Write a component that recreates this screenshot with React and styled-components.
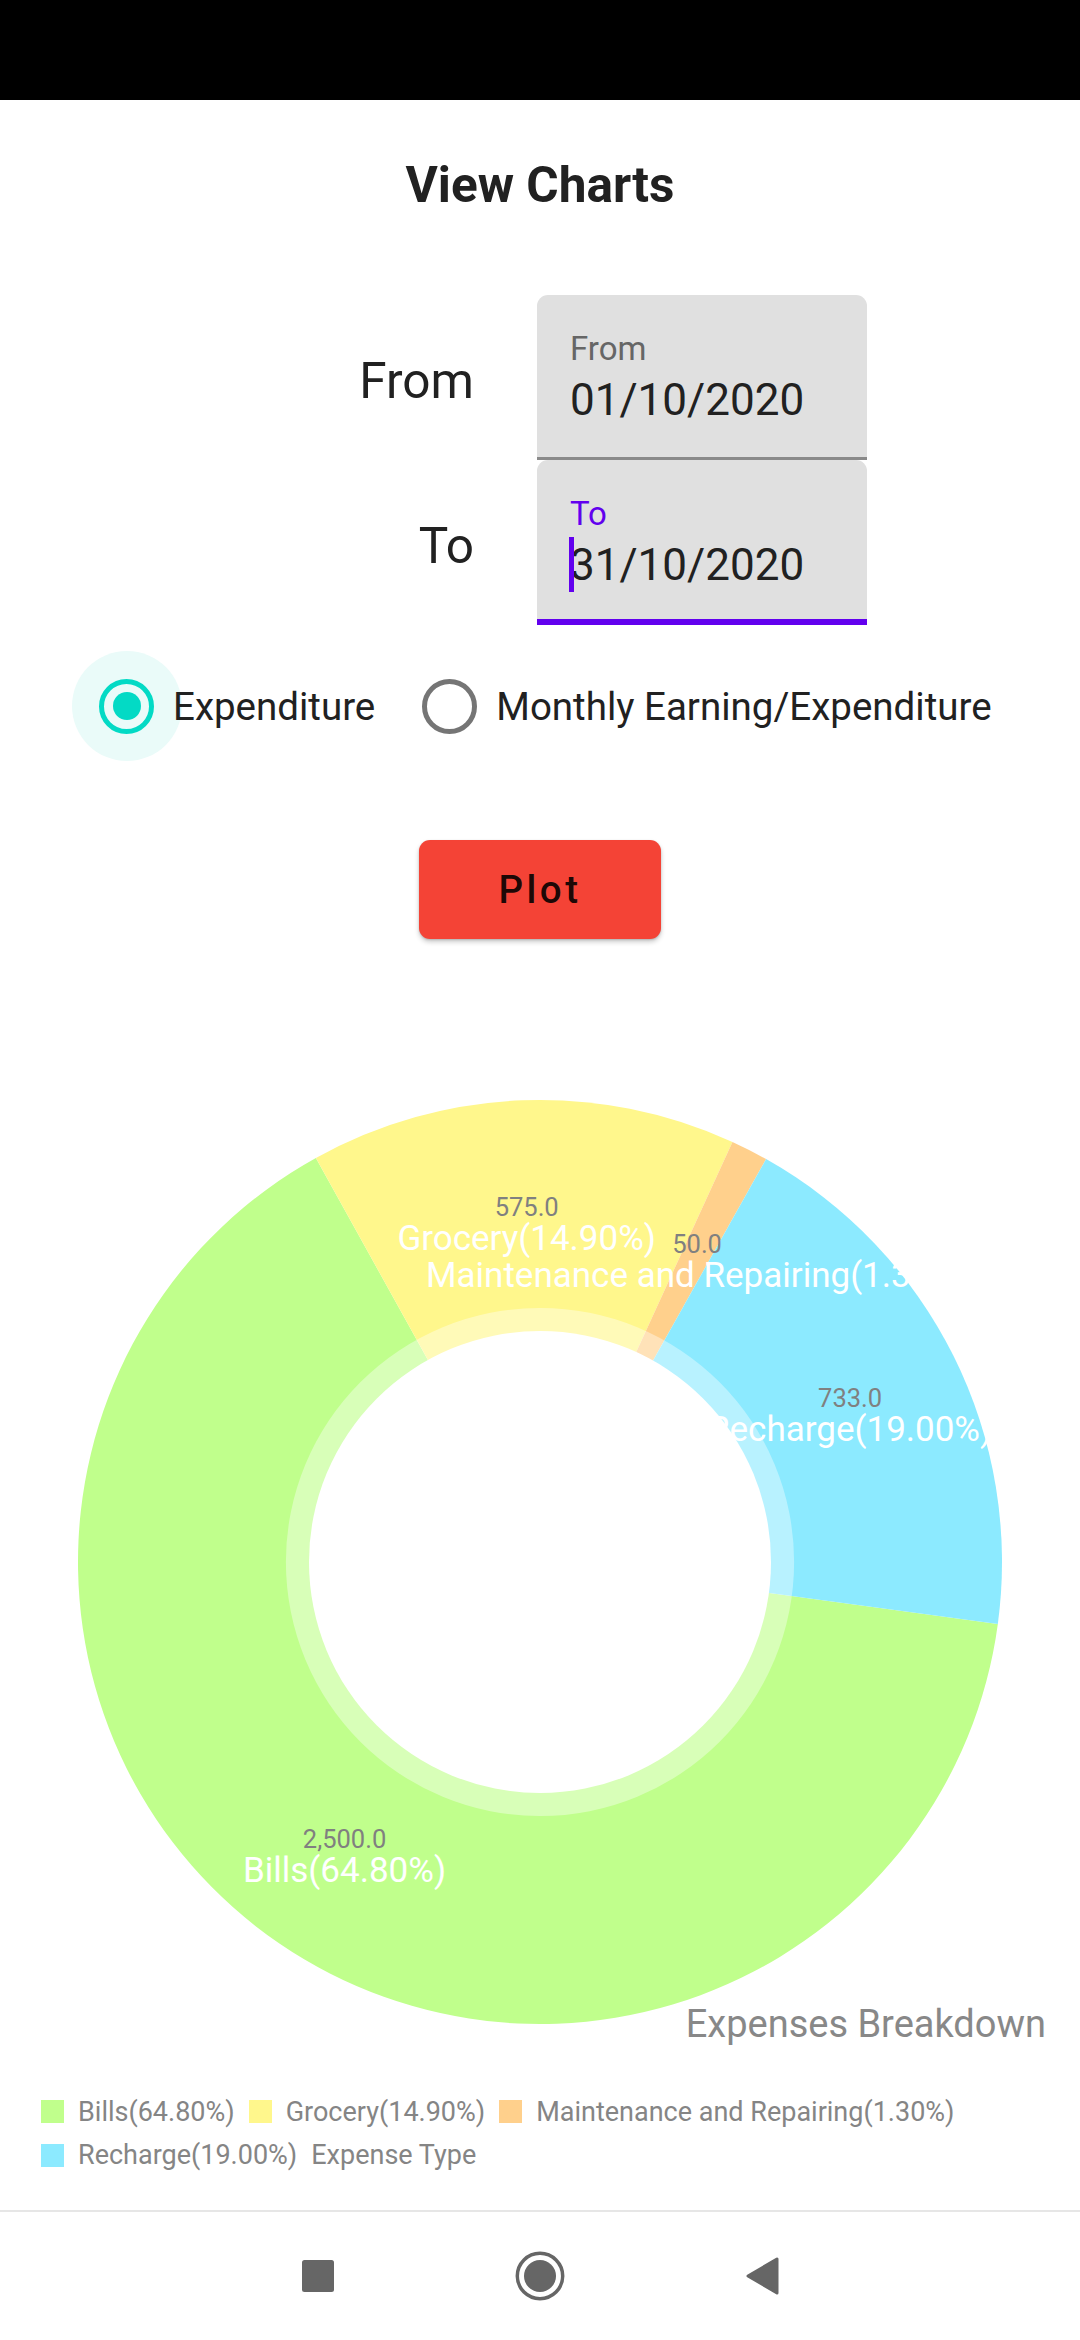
import React from 'react';
import styled, { createGlobalStyle } from 'styled-components';

const GlobalStyle = createGlobalStyle`
  html, body {
    margin: 0;
    padding: 0;
    background: #ffffff;
  }
  body {
    font-family: Roboto, "Noto Sans", "Liberation Sans", sans-serif;
  }
`;

const Screen = styled.div`
  display: flex;
  flex-direction: column;
  width: 1080px;
  min-height: 2340px;
  background: #ffffff;
`;

const StatusBar = styled.div`
  height: 100px;
  flex-shrink: 0;
  background: #000000;
`;

const Content = styled.main`
  display: flex;
  flex-direction: column;
`;

const Title = styled.h1`
  margin: 56px 0 0;
  text-align: center;
  font-size: 49.5px;
  line-height: 58px;
  font-weight: 700;
  color: #212121;
`;

const DateForm = styled.div`
  display: flex;
  flex-direction: column;
  margin-top: 81px;
`;

const DateRow = styled.div`
  display: flex;
  align-items: center;
`;

const RowLabel = styled.div`
  width: 474px;
  margin-right: 63px;
  padding-top: 6px;
  text-align: right;
  font-size: 49.5px;
  line-height: 58px;
  color: #212121;
`;

const Field = styled.div`
  width: 330px;
  height: 165px;
  box-sizing: border-box;
  padding: 34px 0 0 33px;
  background: #e0e0e0;
  border-radius: 11px 11px 0 0;
  border-bottom: ${p => (p.$focused ? '6px solid #6200ee' : '3px solid #8a8a8a')};
`;

const FieldLabel = styled.div`
  font-size: 33px;
  line-height: 40px;
  color: ${p => (p.$focused ? '#6200ee' : '#666666')};
`;

const FieldValue = styled.div`
  position: relative;
  margin-top: 5px;
  font-size: 44px;
  line-height: 52px;
  color: #212121;
`;

const Caret = styled.span`
  position: absolute;
  left: -1px;
  top: -2px;
  width: 5px;
  height: 55px;
  background: #6200ee;
`;

const RadioGroup = styled.div`
  display: flex;
  align-items: center;
  height: 110px;
  margin-top: 26px;
  padding-left: 99px;
`;

const RadioOption = styled.label`
  display: flex;
  align-items: center;
  gap: 19px;
  margin-left: ${p => (p.$first ? '0' : '47px')};
  font-size: 38.5px;
  color: #212121;
`;

const RadioTouch = styled.span`
  display: flex;
  align-items: center;
  justify-content: center;
  width: 110px;
  height: 110px;
  margin: 0 -27.5px;
  border-radius: 50%;
  background: ${p => (p.$active ? '#eafbf9' : 'transparent')};
`;

const RadioCircle = styled.span`
  display: flex;
  align-items: center;
  justify-content: center;
  width: 55px;
  height: 55px;
  box-sizing: border-box;
  border-radius: 50%;
  border: 5.5px solid ${p => (p.$checked ? '#03dac5' : '#757575')};
`;

const RadioDot = styled.span`
  width: 28px;
  height: 28px;
  border-radius: 50%;
  background: #03dac5;
`;

const PlotButton = styled.button`
  display: block;
  width: 242px;
  height: 99px;
  margin: 79px auto 0;
  border: none;
  border-radius: 11px;
  background: #f44336;
  box-shadow: 0 3px 5px rgba(0, 0, 0, 0.2), 0 1px 2px rgba(0, 0, 0, 0.15);
  font-family: Roboto, sans-serif;
  font-size: 38.5px;
  font-weight: 500;
  letter-spacing: 0.09em;
  color: rgba(0, 0, 0, 0.9);
`;

const ChartSvg = styled.svg`
  display: block;
  margin-top: 141px;
`;

const ValueText = styled.text`
  font-family: Roboto, sans-serif;
  font-size: 25.5px;
  fill: #808080;
`;

const SliceLabel = styled.text`
  font-family: Roboto, sans-serif;
  font-size: 35px;
  fill: #ffffff;
`;

const DescriptionText = styled.text`
  font-family: Roboto, sans-serif;
  font-size: 38px;
  fill: #888888;
`;

const Legend = styled.div`
  display: flex;
  flex-wrap: wrap;
  column-gap: 14px;
  margin-top: 30px;
  padding: 0 41px;
`;

const LegendItem = styled.div`
  display: flex;
  align-items: center;
  gap: 14px;
  height: 43.5px;
  font-size: 27px;
  color: #858585;
`;

const LegendSwatch = styled.span`
  width: 23px;
  height: 23px;
  background: ${p => p.$color};
`;

const NavBar = styled.nav`
  display: grid;
  grid-template-columns: repeat(3, 222px);
  justify-content: center;
  justify-items: center;
  align-items: center;
  height: 130px;
  box-sizing: border-box;
  margin-top: auto;
  border-top: 2px solid #e6e6e6;
  background: #ffffff;
`;

const slices = [
  { label: 'Bills', value: '2,500.0', pct: 64.8, color: '#c0ff8c' },
  { label: 'Grocery', value: '575.0', pct: 14.9, color: '#fff78c' },
  { label: 'Maintenance and Repairing', value: '50.0', pct: 1.3, color: '#ffd08c' },
  { label: 'Recharge', value: '733.0', pct: 19.0, color: '#8ceaff' },
];

const CX = 540;
const CY = 1562;
const R = 462;
const START = 7.7;

const point = (angle, radius) => {
  const a = (angle * Math.PI) / 180;
  return [CX + radius * Math.cos(a), CY + radius * Math.sin(a)];
};

const PieChart = () => {
  let angle = START;
  const parts = slices.map(s => {
    const sweep = (s.pct / 100) * 360;
    const from = angle;
    const to = angle + sweep;
    angle = to;
    const [x1, y1] = point(from, R);
    const [x2, y2] = point(to, R);
    const [lx, ly] = point((from + to) / 2, R * 0.75);
    const large = sweep > 180 ? 1 : 0;
    return {
      ...s,
      d: `M${CX} ${CY} L${x1} ${y1} A${R} ${R} 0 ${large} 1 ${x2} ${y2} Z`,
      lx,
      ly,
    };
  });

  return (
    <ChartSvg width="1080" height="980" viewBox="0 1080 1080 980">
      {parts.map(p => (
        <path key={p.label} d={p.d} fill={p.color} />
      ))}
      <circle cx={CX} cy={CY} r={R * 0.55} fill="#ffffff" fillOpacity="0.39" />
      <circle cx={CX} cy={CY} r={R * 0.5} fill="#ffffff" />
      {parts.map(p => (
        <g key={`t-${p.label}`}>
          <ValueText x={p.lx} y={p.ly} textAnchor="middle">{p.value}</ValueText>
          <SliceLabel x={p.lx} y={p.ly + 34} textAnchor="middle">
            {`${p.label}(${p.pct.toFixed(2)}%)`}
          </SliceLabel>
        </g>
      ))}
      <DescriptionText x="1046" y="2037" textAnchor="end">Expenses Breakdown</DescriptionText>
    </ChartSvg>
  );
};

const App = () => {
  return (
    <Screen>
      <GlobalStyle />
      <StatusBar />
      <Content>
        <Title>View Charts</Title>

        <DateForm>
          <DateRow>
            <RowLabel>From</RowLabel>
            <Field>
              <FieldLabel>From</FieldLabel>
              <FieldValue>01/10/2020</FieldValue>
            </Field>
          </DateRow>
          <DateRow>
            <RowLabel>To</RowLabel>
            <Field $focused>
              <FieldLabel $focused>To</FieldLabel>
              <FieldValue>
                <Caret />
                31/10/2020
              </FieldValue>
            </Field>
          </DateRow>
        </DateForm>

        <RadioGroup>
          <RadioOption $first>
            <RadioTouch $active>
              <RadioCircle $checked>
                <RadioDot />
              </RadioCircle>
            </RadioTouch>
            Expenditure
          </RadioOption>
          <RadioOption>
            <RadioTouch>
              <RadioCircle />
            </RadioTouch>
            Monthly Earning/Expenditure
          </RadioOption>
        </RadioGroup>

        <PlotButton>Plot</PlotButton>

        <PieChart />

        <Legend>
          {slices.map(s => (
            <LegendItem key={s.label}>
              <LegendSwatch $color={s.color} />
              {`${s.label}(${s.pct.toFixed(2)}%)`}
            </LegendItem>
          ))}
          <LegendItem>Expense Type</LegendItem>
        </Legend>
      </Content>

      <NavBar>
        <svg width="40" height="40" viewBox="0 0 40 40">
          <rect x="4" y="4" width="32" height="32" rx="2.5" fill="#666666" />
        </svg>
        <svg width="54" height="54" viewBox="0 0 54 54">
          <circle cx="27" cy="27" r="22.7" fill="none" stroke="#666666" strokeWidth="3.5" />
          <circle cx="27" cy="27" r="16" fill="#666666" />
        </svg>
        <svg width="40" height="44" viewBox="0 0 40 44">
          <polygon
            points="35,5 35,39 6,22"
            fill="#666666"
            stroke="#666666"
            strokeWidth="3"
            strokeLinejoin="round"
          />
        </svg>
      </NavBar>
    </Screen>
  );
};

export default App;
